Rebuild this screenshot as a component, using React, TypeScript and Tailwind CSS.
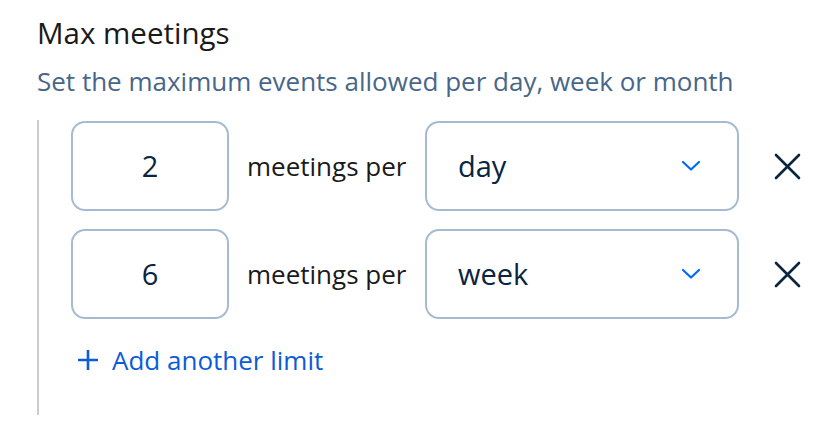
const FONT = { fontFamily: '"Open Sans", "Liberation Sans", sans-serif' };

function Chevron() {
  return (
    <svg width="20" height="12" viewBox="0 0 20 12" fill="none">
      <path d="M2 2l8 7.5L18 2" stroke="#0069ff" strokeWidth="2.2" strokeLinecap="round" strokeLinejoin="round" />
    </svg>
  );
}

function CloseIcon() {
  return (
    <svg width="27" height="27" viewBox="0 0 27 27" fill="none">
      <path d="M2 2l23 23M25 2L2 25" stroke="#0a2540" strokeWidth="2.6" strokeLinecap="round" />
    </svg>
  );
}

function LimitRow({ count, unit }: { count: string; unit: string }) {
  return (
    <div className="flex items-center h-[90px]">
      <div className="w-[158px] h-[90px] shrink-0 border-2 border-[#a6bbd1] rounded-[14px] flex items-center justify-center text-[29px] text-[#0a2540]">
        {count}
      </div>
      <span className="ml-[18px] w-[178px] shrink-0 text-[26px] text-[#1a1a1a] whitespace-nowrap">meetings per</span>
      <div className="w-[314px] h-[90px] shrink-0 border-2 border-[#a6bbd1] rounded-[14px] flex items-center pl-[31px] pr-[36px]">
        <span className="flex-1 text-[29px] text-[#0a2540]">{unit}</span>
        <Chevron />
      </div>
      <div className="ml-[35px] flex items-center">
        <CloseIcon />
      </div>
    </div>
  );
}

export default function App() {
  return (
    <div className="w-[836px] h-[438px] bg-white pl-[37px] pt-[17px]" style={FONT}>
      <h1 className="text-[29.5px] leading-[32px] text-[#1a1a1a]">Max meetings</h1>
      <p className="mt-[17px] text-[26px] leading-[30px] text-[#476788] whitespace-nowrap">
        Set the maximum events allowed per day, week or month
      </p>
      <div className="mt-[24px] border-l-2 border-[#cccccc] pl-[32px] pt-[1px] pb-[40px]">
        <div className="flex flex-col gap-[18px]">
          <LimitRow count="2" unit="day" />
          <LimitRow count="6" unit="week" />
        </div>
        <button className="mt-[26px] flex items-center h-[30px] text-[#0b5cd7] text-[26px]">
          <svg width="22" height="22" viewBox="0 0 22 22" fill="none" className="ml-[6px]">
            <path d="M11 1v20M1 11h20" stroke="#0b5cd7" strokeWidth="2.6" />
          </svg>
          <span className="ml-[13px]">Add another limit</span>
        </button>
      </div>
    </div>
  );
}
